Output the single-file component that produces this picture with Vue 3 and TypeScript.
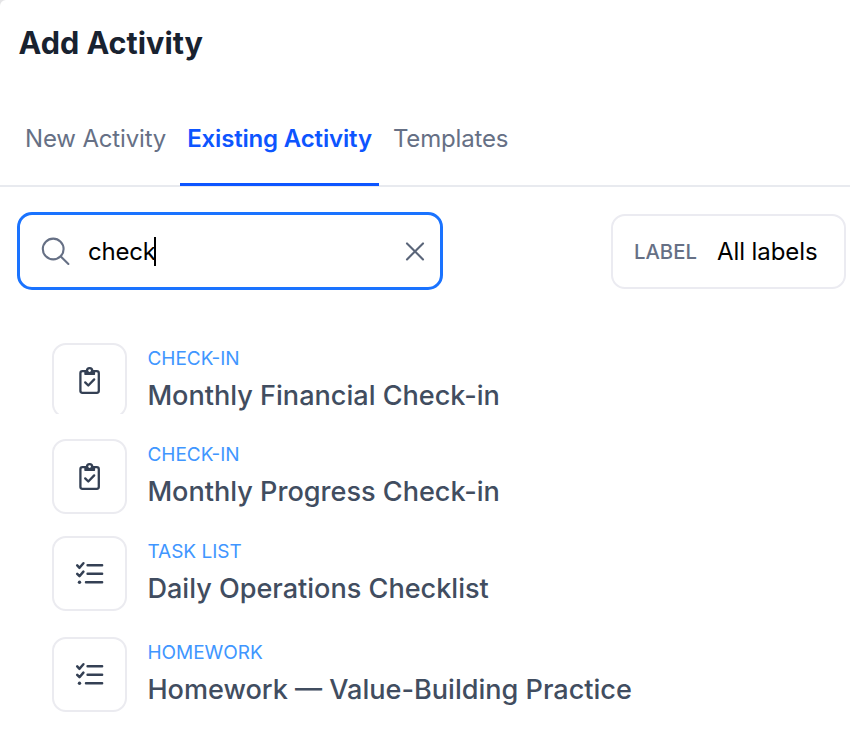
<script setup lang="ts">
import { ref } from 'vue'

type IconKind = 'clipboard' | 'list'

interface Activity {
  kind: string
  title: string
  icon: IconKind
  clipped?: boolean
}

const tabs = ['New Activity', 'Existing Activity', 'Templates']
const activeTab = ref('Existing Activity')
const query = ref('check')

const activities: Activity[] = [
  { kind: 'CHECK-IN', title: 'Monthly Financial Check-in', icon: 'clipboard', clipped: true },
  { kind: 'CHECK-IN', title: 'Monthly Progress Check-in', icon: 'clipboard' },
  { kind: 'TASK LIST', title: 'Daily Operations Checklist', icon: 'list' },
  { kind: 'HOMEWORK', title: 'Homework — Value-Building Practice', icon: 'list' },
]
</script>

<template>
  <main class="panel">
    <h1 class="heading"><span>Add Activity</span></h1>

    <nav class="tabs">
      <button
        v-for="tab in tabs"
        :key="tab"
        type="button"
        class="tab"
        :class="{ active: tab === activeTab }"
        @click="activeTab = tab"
      >
        <span>{{ tab }}</span>
      </button>
    </nav>

    <div class="filters">
      <div class="search">
        <svg class="search-icon" viewBox="0 0 30 30" fill="none" stroke="#667085" stroke-width="2.1" stroke-linecap="round">
          <circle cx="12.2" cy="13" r="10.4" />
          <path d="M19.8 20.6 L27.4 28" />
        </svg>
        <span class="query">{{ query }}</span>
        <span class="caret"></span>
        <button type="button" class="clear" aria-label="Clear" @click="query = ''">
          <svg viewBox="0 0 20 20" fill="none" stroke="#5a6579" stroke-width="2.1" stroke-linecap="round">
            <path d="M2 2.4 L18 18.4 M18 2.4 L2 18.4" />
          </svg>
        </button>
      </div>
      <div class="label-filter">
        <span class="label-name">LABEL</span>
        <span class="label-value">All labels</span>
      </div>
    </div>

    <ul class="list">
      <li v-for="item in activities" :key="item.title" class="row">
        <div class="tile-wrap" :class="{ clipped: item.clipped }">
          <div class="tile">
            <svg
              v-if="item.icon === 'clipboard'"
              viewBox="0 0 32 32"
              fill="none"
              stroke="#344054"
              stroke-width="2.3"
              stroke-linecap="round"
              stroke-linejoin="round"
            >
              <rect x="6.4" y="6.2" width="18.4" height="21.6" rx="2" />
              <path d="M11 9.2 V6.8 Q11 5.8 12 5.8 H12.5 A3.1 3.1 0 0 1 18.7 5.8 H19.4 Q20.4 5.8 20.4 6.8 V9.2 Z" fill="#344054" stroke-width="1.4" />
              <circle cx="15.6" cy="5.6" r="1.3" fill="#fff" stroke="none" />
              <path d="M11.2 17.4 L14.3 20.5 L20.2 14.4" />
            </svg>
            <svg
              v-else
              viewBox="0 0 32 32"
              fill="none"
              stroke="#344054"
              stroke-width="2.5"
              stroke-linecap="round"
              stroke-linejoin="round"
            >
              <path d="M3.2 7.4 L5.5 9.8 L9.4 5.2" />
              <path d="M3.2 15.8 L5.5 18.2 L9.4 13.6" />
              <path d="M13.6 7.2 H28.1 M13.6 15.7 H28.1 M12 24.2 H28.1" />
              <circle cx="5.5" cy="24.2" r="1.7" fill="#344054" stroke="none" />
            </svg>
          </div>
        </div>
        <div class="text">
          <div class="kind"><span>{{ item.kind }}</span></div>
          <div class="title"><span>{{ item.title }}</span></div>
        </div>
      </li>
    </ul>
  </main>
</template>

<style>
body {
  background: #e4e4e6;
}
</style>

<style scoped>
.panel {
  box-sizing: border-box;
  width: 850px;
  height: 734px;
  overflow: hidden;
  border-top-left-radius: 6px;
  background: #fff;
  font-family: Inter, "Liberation Sans", sans-serif;
}

button {
  border: 0;
  padding: 0;
  background: none;
  font: inherit;
}

.heading {
  margin: 0;
  padding: 23px 0 0 18.5px;
  height: 87px;
  box-sizing: border-box;
  font-size: 30.6px;
  line-height: 40px;
  font-weight: 700;
  color: #182230;
}

.tabs {
  display: flex;
  height: 100px;
  box-sizing: border-box;
  padding-left: 18px;
  border-bottom: 2px solid #e8eaef;
}

.tab {
  box-sizing: border-box;
  height: 99px;
  padding: 36px 7px 0;
  display: flex;
  align-items: flex-start;
  white-space: nowrap;
  font-size: 24px;
  line-height: 31px;
  letter-spacing: -0.16px;
  color: #667085;
  margin-right: 7px;
}

.tab.active {
  color: #0d55ff;
  font-weight: 600;
  border-bottom: 3px solid #0d55ff;
}

.filters {
  display: flex;
  justify-content: space-between;
  align-items: center;
  padding: 25px 4px 0 17px;
}

.search {
  box-sizing: border-box;
  display: flex;
  align-items: center;
  width: 426px;
  height: 78px;
  padding: 0 15px 0 21px;
  border: 3px solid #1a73ff;
  border-radius: 15px;
}

.search-icon {
  width: 30px;
  height: 30px;
}

.query {
  margin-left: 17px;
  padding-top: 2px;
  font-size: 24px;
  line-height: 32px;
  letter-spacing: -0.2px;
  color: #000;
}

.caret {
  width: 2px;
  height: 29px;
  margin-left: -1.5px;
  background: #000;
}

.clear {
  width: 20px;
  height: 20px;
  margin-left: auto;
}

.clear svg {
  display: block;
}

.label-filter {
  box-sizing: border-box;
  display: flex;
  align-items: center;
  width: 235px;
  height: 75px;
  padding-left: 21px;
  border: 2px solid #ebebf1;
  border-radius: 14px;
  white-space: nowrap;
}

.label-name {
  width: 83px;
  font-size: 20.3px;
  font-weight: 500;
  color: #667085;
}

.label-value {
  font-size: 24px;
  letter-spacing: -0.08px;
  color: #000;
}

.list {
  list-style: none;
  margin: 0;
  padding: 53px 0 0 52px;
}

.row {
  display: flex;
  gap: 20.4px;
  height: 97px;
}

.row:nth-child(1) {
  height: 96px;
}

.row:nth-child(3) {
  height: 101px;
}

.tile-wrap {
  width: 75px;
  height: 75px;
}

.tile-wrap.clipped {
  height: 71px;
  overflow: hidden;
}

.tile {
  box-sizing: border-box;
  display: flex;
  align-items: center;
  justify-content: center;
  width: 75px;
  height: 75px;
  border: 2px solid #ebebf0;
  border-radius: 14px;
}

.tile svg {
  width: 32px;
  height: 32px;
}

.text {
  padding-top: 1px;
  white-space: nowrap;
}

.kind {
  height: 30px;
  font-size: 19px;
  line-height: 30px;
  color: #4096ff;
}

.title {
  margin-top: 4px;
  font-size: 27.08px;
  line-height: 36px;
  font-weight: 500;
  color: #414d60;
}
</style>
